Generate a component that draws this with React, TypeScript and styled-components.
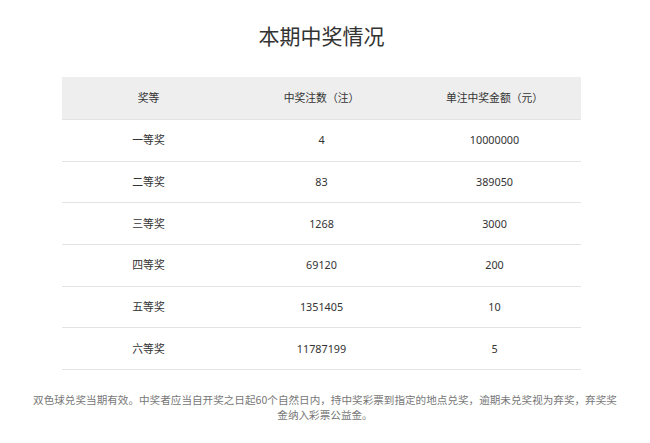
import React from "react";
import styled, { createGlobalStyle } from "styled-components";

const Global = createGlobalStyle`
  html, body { margin: 0; padding: 0; background: #ffffff; }
  body { font-family: "Noto Sans", "Noto Sans CJK SC", sans-serif; color: #333333; }
`;

const Page = styled.div`
  width: 650px;
  padding-top: 21px;
  box-sizing: border-box;
`;

const Title = styled.h1`
  margin: 0 0 0 62px;
  width: 519px;
  text-align: center;
  font-family: "Noto Sans CJK SC", sans-serif;
  font-size: 21px;
  font-weight: 400;
  line-height: 28px;
  color: #333333;
`;

const Table = styled.div`
  margin: 28px 0 0 62px;
  width: 519px;
`;

const Row = styled.div<{ $head?: boolean }>`
  display: grid;
  grid-template-columns: 1fr 1fr 1fr;
  align-items: center;
  box-sizing: border-box;
  height: ${(p) => (p.$head ? "43px" : "41.67px")};
  background: ${(p) => (p.$head ? "#eeeeee" : "#ffffff")};
  border-bottom: 1px solid #e3e3e3;
`;

const Cell = styled.div`
  text-align: center;
  font-size: 10.8px;
  line-height: 16px;
  color: #333333;
`;

const Note = styled.p`
  margin: 22px 0 0 31px;
  width: 588px;
  text-align: center;
  font-family: "Noto Sans CJK SC", sans-serif;
  font-size: 10.6px;
  line-height: 15.5px;
  color: #777777;
`;

const rows = [
  ["一等奖", "4", "10000000"],
  ["二等奖", "83", "389050"],
  ["三等奖", "1268", "3000"],
  ["四等奖", "69120", "200"],
  ["五等奖", "1351405", "10"],
  ["六等奖", "11787199", "5"],
];

export default function App() {
  return (
    <Page>
      <Global />
      <Title>本期中奖情况</Title>
      <Table>
        <Row $head>
          <Cell>奖等</Cell>
          <Cell>中奖注数（注）</Cell>
          <Cell>单注中奖金额（元）</Cell>
        </Row>
        {rows.map((r) => (
          <Row key={r[0]}>
            <Cell>{r[0]}</Cell>
            <Cell>{r[1]}</Cell>
            <Cell>{r[2]}</Cell>
          </Row>
        ))}
      </Table>
      <Note>
        双色球兑奖当期有效。中奖者应当自开奖之日起60个自然日内，持中奖彩票到指定的地点兑奖，逾期未兑奖视为弃奖，弃奖奖金纳入彩票公益金。
      </Note>
    </Page>
  );
}
